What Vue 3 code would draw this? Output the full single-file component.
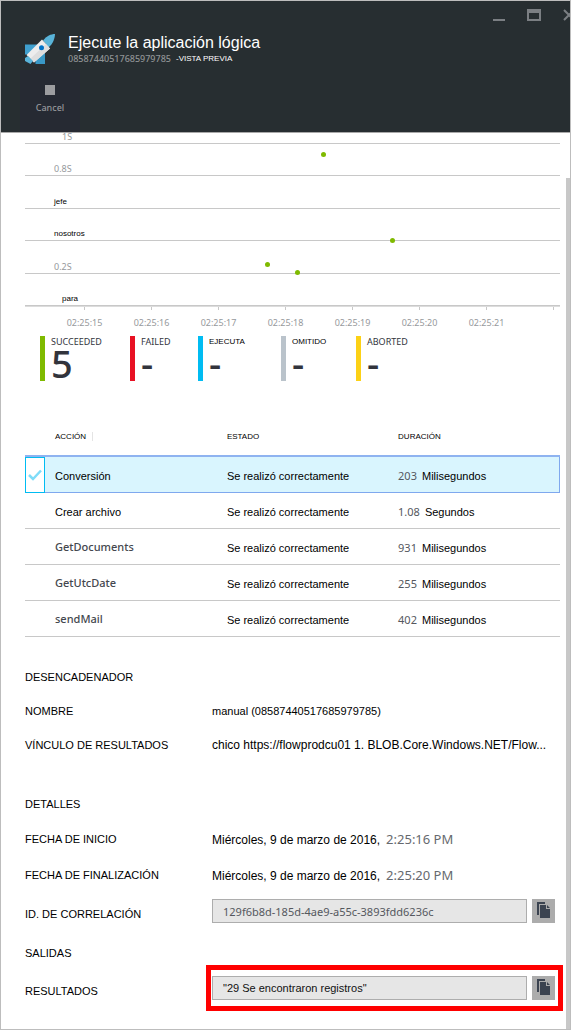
<script setup>
import { ref } from 'vue'

const gridRows = [
  { label: '1S', indent: true },
  { label: '0.8S' },
  { label: 'jefe', dark: true },
  { label: 'nosotros', dark: true },
  { label: '0.2S' },
  { label: 'para', dark: true, indent: true },
]
const points = [
  { x: 69, y: -2 },
  { x: 55.8, y: 22 },
  { x: 68.8, y: 108 },
  { x: 45.5, y: 132 },
  { x: 51.1, y: 140 },
]
const times = ['02:25:15', '02:25:16', '02:25:17', '02:25:18', '02:25:19', '02:25:20', '02:25:21', '']
const stats = [
  { name: 'SUCCEEDED', value: '5', tone: 'green' },
  { name: 'FAILED', value: '-', tone: 'red' },
  { name: 'EJECUTA', value: '-', tone: 'blue', arial: true },
  { name: 'OMITIDO', value: '-', tone: 'gray', arial: true },
  { name: 'ABORTED', value: '-', tone: 'yellow' },
]
const actions = ref([
  { name: 'Conversión', amount: '203', unit: 'Milisegundos', selected: true },
  { name: 'Crear archivo', amount: '1.08', unit: 'Segundos' },
  { name: 'GetDocuments', amount: '931', unit: 'Milisegundos', latin: true },
  { name: 'GetUtcDate', amount: '255', unit: 'Milisegundos', latin: true },
  { name: 'sendMail', amount: '402', unit: 'Milisegundos', latin: true },
])
</script>

<template>
  <div class="blade">
    <header class="top">
      <div class="controls">
        <button type="button" aria-label="Minimizar">
          <svg width="12" height="12" viewBox="0 0 12 12"><path d="M0 10h12v2H0z" fill="#7b7f83" /></svg>
        </button>
        <button type="button" aria-label="Maximizar">
          <svg width="14" height="12" viewBox="0 0 14 12"><path fill-rule="evenodd" d="M0 0h14v12H0zM2 4v6h10V4z" fill="#7b7f83" /></svg>
        </button>
        <button type="button" aria-label="Cerrar">
          <svg width="12" height="12" viewBox="0 0 12 12"><path d="M1 1l10 10M11 1L1 11" stroke="#7b7f83" stroke-width="2" /></svg>
        </button>
      </div>
      <div class="brand">
        <svg class="rocket" width="30" height="30" viewBox="0 0 30 30" aria-hidden="true">
          <path d="M0 10.500H14L4.500 20.500H0z" fill="#3f9fce" />
          <path d="M20 16V30H10.500V25z" fill="#3999c6" />
          <path d="M18 6.500C21.500 2 26 0 30 0C30 4 28 10 23.500 13.500z" fill="#59b4d9" />
          <path d="M25 14.500L9 28.500L1.500 21L17 5.500z" fill="#ededed" />
          <path d="M25 14.500L9 28.500L5.500 24.500L21 10z" fill="#dedede" />
          <path d="M3 22L8 27L5.500 30L0 27V24z" fill="#59b4d9" />
          <circle cx="16.500" cy="13.800" r="2.500" fill="#0072c6" />
        </svg>
        <div>
          <h1>Ejecute la aplicación lógica</h1>
          <p class="sub"><span class="latin">08587440517685979785</span><span class="preview">-VISTA PREVIA</span></p>
        </div>
      </div>
      <button class="cancel" type="button"><span class="stop"></span>Cancel</button>
    </header>

    <div class="body">
      <main>
        <div class="chart">
          <div v-for="row in gridRows" :key="row.label" class="line" :class="{ dark: row.dark, indent: row.indent }">{{ row.label }}</div>
          <span v-for="(p, i) in points" :key="i" class="dot" :style="{ left: p.x + '%', top: p.y + 'px' }"></span>
        </div>
        <div class="axis">
          <div v-for="t in times" :key="t" class="tick">{{ t }}</div>
        </div>

        <div class="stats">
          <div v-for="s in stats" :key="s.name" class="stat" :class="s.tone">
            <span class="stat-name" :class="{ arial: s.arial }">{{ s.name }}</span>
            <span class="stat-value">{{ s.value }}</span>
          </div>
        </div>

        <table>
          <colgroup><col class="c-check" /><col class="c-name" /><col class="c-state" /><col /></colgroup>
          <thead>
            <tr>
              <th></th>
              <th class="first"><span class="sep">ACCIÓN</span></th>
              <th>ESTADO</th>
              <th>DURACIÓN</th>
            </tr>
          </thead>
          <tbody>
            <tr v-for="a in actions" :key="a.name" :class="{ selected: a.selected }">
              <td class="check">
                <label v-if="a.selected">
                  <input v-model="a.selected" type="checkbox" :aria-label="a.name" />
                  <svg width="14" height="12" viewBox="0 0 14 12" aria-hidden="true"><path d="M1 6L5 10L13 1.500" fill="none" stroke="#7fdcf8" stroke-width="2.500" /></svg>
                </label>
              </td>
              <td class="first" :class="{ latin: a.latin }">{{ a.name }}</td>
              <td>Se realizó correctamente</td>
              <td><span class="amount">{{ a.amount }}</span>{{ a.unit }}</td>
            </tr>
          </tbody>
        </table>

        <section class="trigger">
          <h2>DESENCADENADOR</h2>
          <div class="row"><span>NOMBRE</span><span>manual (08587440517685979785)</span></div>
          <div class="row"><span>VÍNCULO DE RESULTADOS</span><span class="large">chico https://flowprodcu01 1. BLOB.Core.Windows.NET/Flow...</span></div>
        </section>

        <section class="details">
          <h2>DETALLES</h2>
          <div class="row"><span>FECHA DE INICIO</span><span class="large">Miércoles, 9 de marzo de 2016,<span class="time">2:25:16 PM</span></span></div>
          <div class="row"><span>FECHA DE FINALIZACIÓN</span><span class="large">Miércoles, 9 de marzo de 2016,<span class="time">2:25:20 PM</span></span></div>
          <div class="row">
            <label for="correlation">ID. DE CORRELACIÓN</label>
            <div class="field">
              <input id="correlation" class="latin" type="text" readonly value="129f6b8d-185d-4ae9-a55c-3893fdd6236c" />
              <button type="button" aria-label="Copiar ID. de correlación">
                <svg width="13" height="16" viewBox="0 0 13 16"><path d="M0 0h8v2H2v11H0z" fill="#3b4350" /><path d="M3 3h6v4h4v9H3zM10 3l3 3h-3z" fill="#3b4350" /></svg>
              </button>
            </div>
          </div>
        </section>

        <section class="outputs">
          <h2>SALIDAS</h2>
          <div class="row">
            <label for="result">RESULTADOS</label>
            <div class="field highlight">
              <input id="result" type="text" readonly value="&quot;29 Se encontraron registros&quot;" />
              <button type="button" aria-label="Copiar resultados">
                <svg width="13" height="16" viewBox="0 0 13 16"><path d="M0 0h8v2H2v11H0z" fill="#3b4350" /><path d="M3 3h6v4h4v9H3zM10 3l3 3h-3z" fill="#3b4350" /></svg>
              </button>
            </div>
          </div>
        </section>
      </main>
      <div class="scroll"></div>
    </div>
  </div>
</template>

<style>
body {
  margin: 0;
  background: #fff;
}
</style>

<style scoped>
* {
  box-sizing: border-box;
}
.blade {
  min-height: 100vh;
  display: flex;
  flex-direction: column;
  border: 1px solid #bdbdbd;
  font: 11px/14px "Liberation Sans", Arial, sans-serif;
  color: #000;
}
button {
  border: 0;
  padding: 0;
  background: none;
}
svg {
  display: block;
}
.latin {
  font-family: "Noto Sans", sans-serif;
}
.top {
  background: #272e31;
  overflow: hidden;
  padding-left: 24px;
}
.controls {
  height: 29px;
  display: flex;
  justify-content: flex-end;
  align-items: flex-start;
  gap: 22px;
  padding-top: 8px;
  margin-right: -5px;
}
.brand {
  display: flex;
  align-items: center;
  gap: 13px;
  height: 38px;
}
h1 {
  margin: 0;
  font-size: 16px;
  font-weight: 400;
  line-height: 20px;
  color: #fff;
}
.sub {
  display: flex;
  gap: 5px;
  margin: 0;
  font-size: 9px;
  font-weight: 500;
  line-height: 12px;
  color: #8f9294;
}
.preview {
  font-size: 8px;
  font-weight: 400;
  color: #fff;
}
.cancel {
  display: flex;
  flex-direction: column;
  align-items: center;
  gap: 6px;
  width: 60px;
  height: 62px;
  margin: 2px 0 0 -5px;
  padding-top: 15px;
  background: #262a33;
  color: #96989b;
  font: 500 9px/14px "Noto Sans", sans-serif;
}
.stop {
  width: 10px;
  height: 10px;
  background: #9c9da0;
}
.body {
  flex: 1;
  display: flex;
  border-top: 1px solid #a9a9a9;
}
main {
  flex: 1;
  min-width: 0;
  padding: 0 6px 0 24px;
}
.scroll {
  width: 4px;
  margin-top: 45px;
  background: #c8c8c8;
}
.chart {
  position: relative;
  display: grid;
  grid-template-rows: 11px repeat(5, 1fr);
  height: 173px;
  overflow: hidden;
}
.line {
  display: flex;
  align-items: flex-end;
  padding-left: 29px;
  border-bottom: 1px solid #c8c8c8;
  font: 9px/12px "Noto Sans", sans-serif;
  color: #96999c;
}
.line.dark {
  font: 8px/12px "Liberation Sans", Arial, sans-serif;
  color: #000;
}
.line.indent {
  padding-left: 37px;
}
.dot {
  position: absolute;
  width: 5px;
  height: 5px;
  margin: -3px 0 0 -3px;
  border-radius: 50%;
  background: #7fba00;
}
.axis {
  display: grid;
  grid-template-columns: repeat(8, 67px);
  padding-left: 26px;
  overflow: hidden;
  border-top: 1px solid #dcdcdc;
}
.tick {
  display: flex;
  flex-direction: column;
  align-items: center;
  gap: 6px;
  font: 9px/13px "Noto Sans", sans-serif;
  color: #96999c;
}
.tick::before {
  content: "";
  width: 1px;
  height: 3px;
  background: #c8c8c8;
}
.stats {
  display: grid;
  grid-template-columns: 90px 68px 83px 75px 1fr;
  margin: 7px 0 0 15px;
}
.stat {
  display: flex;
  flex-direction: column;
  height: 45px;
  padding-left: 6px;
  border-left: 5px solid;
  font-family: "Noto Sans", sans-serif;
}
.green { border-color: #7fba00; }
.red { border-color: #e81123; }
.blue { border-color: #00bcf2; }
.gray { border-color: #bac3cb; }
.yellow { border-color: #fcd116; }
.stat-name {
  font-size: 9px;
  line-height: 11px;
  color: #32343c;
}
.stat-name.arial {
  font-family: "Liberation Sans", Arial, sans-serif;
  font-size: 8px;
  color: #000;
}
.stat-value {
  font-size: 38px;
  font-weight: 500;
  line-height: 32px;
  color: #32343c;
}
table {
  width: 100%;
  margin-top: 38px;
  table-layout: fixed;
  border-spacing: 0;
}
.c-check { width: 20px; }
.c-name { width: 34%; }
.c-state { width: 32%; }
th {
  height: 38px;
  padding: 0;
  border-bottom: 2px solid #8fb3f0;
  font-size: 8px;
  font-weight: 400;
  text-align: left;
}
td {
  height: 36px;
  padding: 2px 0 0;
  border-bottom: 1px solid #c8c8c8;
}
.first {
  padding-left: 10px;
}
td.latin {
  padding-top: 0;
  font-weight: 500;
  color: #44474e;
}
.sep {
  padding-right: 6px;
  border-right: 1px solid #e4e4e4;
}
.selected td {
  background: #d9f5fe;
  border-bottom: 1px solid #7fa8ee;
}
.selected td:last-child {
  border-right: 1px solid #7fa8ee;
}
.selected .check {
  padding: 0;
  background: #fff;
  border: 1px solid #00bcf2;
}
.check label {
  display: grid;
  place-items: center;
}
.check input {
  appearance: none;
  grid-area: 1 / 1;
  width: 18px;
  height: 30px;
  margin: 0;
}
.check svg {
  grid-area: 1 / 1;
  pointer-events: none;
}
.amount {
  margin-right: 5px;
  font-family: "Noto Sans", sans-serif;
  color: #55585e;
}
section {
  padding-right: 5px;
}
.trigger {
  margin-top: 23px;
}
.details {
  margin-top: 25px;
}
.outputs {
  margin-top: 12px;
}
h2 {
  margin: 0;
  font-size: 11px;
  font-weight: 400;
  line-height: 34px;
}
.row {
  display: grid;
  grid-template-columns: 187px minmax(0, 1fr);
  align-items: center;
  min-height: 34px;
}
.row > label {
  padding-top: 6px;
}
.details .row {
  min-height: 36px;
}
.outputs h2 {
  line-height: 24px;
}
.large {
  font-size: 12px;
  white-space: nowrap;
}
.time {
  margin-left: 6px;
  font: 13px/14px "Noto Sans", sans-serif;
  color: #66696e;
}
.field {
  display: flex;
  gap: 5px;
}
.field input {
  flex: 1;
  min-width: 0;
  height: 24px;
  padding: 0 10px;
  border: 1px solid #adadad;
  background: #e6e6e6;
  font-family: "Liberation Sans", Arial, sans-serif;
  font-size: 11px;
  color: #111;
  outline: 0;
}
.field input.latin {
  font-family: "Noto Sans", sans-serif;
  color: #55585e;
}
.field button {
  display: grid;
  place-items: center;
  width: 23px;
  height: 24px;
  padding-bottom: 2px;
  background: #acacac;
}
.highlight {
  margin: 0 -8px 0 -6px;
  padding: 6px 3px 6px 1px;
  border: 5px solid #f00;
}
</style>
